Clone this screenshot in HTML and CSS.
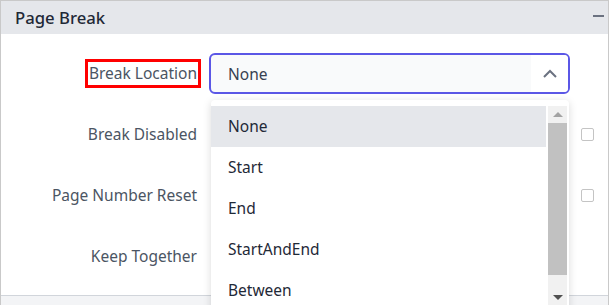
FILE: index.html
```html
<!DOCTYPE html>
<html lang="en">
  <head>
    <meta charset="UTF-8" />
    <meta name="viewport" content="width=device-width, initial-scale=1.0" />
    <title>Page Break</title>
    <link rel="stylesheet" href="styles.css">
  </head>
  <body>
    <div class="panel">
      <div class="panel-header">
        <span class="panel-title">Page Break</span>
        <span class="collapse-icon"></span>
      </div>

      <div class="panel-body">
        <div class="prop-row">
          <div class="prop-label"><span class="marked">Break Location</span></div>
          <div class="prop-control">
            <div class="dropdown">
              <span class="dropdown-value">None</span>
              <span class="dropdown-toggle">
                <svg width="16" height="10" viewBox="0 0 16 10">
                  <path d="M2 8 L8 2 L14 8" fill="none" stroke="#6b7280" stroke-width="2" />
                </svg>
              </span>
            </div>
            <!-- open list of the select -->
            <div class="dropdown-popup">
              <ul class="dropdown-list">
                <li class="active">None</li>
                <li>Start</li>
                <li>End</li>
                <li>StartAndEnd</li>
                <li>Between</li>
              </ul>
              <div class="scrollbar">
                <div class="scroll-btn"><span class="arrow-up"></span></div>
                <div class="scroll-thumb"></div>
                <div class="scroll-rest"></div>
                <div class="scroll-btn"><span class="arrow-down"></span></div>
              </div>
            </div>
          </div>
          <div class="prop-extra"></div>
        </div>

        <div class="prop-row">
          <div class="prop-label">Break Disabled</div>
          <div class="prop-control"></div>
          <div class="prop-extra"><span class="checkbox"></span></div>
        </div>

        <div class="prop-row">
          <div class="prop-label">Page Number Reset</div>
          <div class="prop-control"></div>
          <div class="prop-extra"><span class="checkbox"></span></div>
        </div>

        <div class="prop-row">
          <div class="prop-label">Keep Together</div>
          <div class="prop-control"></div>
          <div class="prop-extra"></div>
        </div>
      </div>

      <div class="panel-next"></div>
    </div>
  </body>
</html>
```

FILE: styles.css
```css
body {
  margin: 0;
  padding: 0;
  font-family: "Noto Sans", sans-serif;
  background: #fff;
  width: 610px;
  height: 305px;
  overflow: hidden;
}

.panel {
  width: 609px;
  box-sizing: border-box;
  border: 1px solid #c9c9c9;
  background: #fff;
}

.panel-header {
  height: 33px;
  background: #e5e7eb;
  display: flex;
  align-items: center;
  justify-content: space-between;
  padding: 0 4px 0 14px;
}

.panel-title {
  font-size: 16.7px;
  font-weight: 500;
  color: #1f2937;
}

.collapse-icon {
  width: 11px;
  height: 2px;
  background: #6b7280;
  margin-bottom: 3px;
}

.panel-body {
  padding: 19px 0 18px 0;
  display: flex;
  flex-direction: column;
  gap: 20px;
}

.prop-row {
  display: grid;
  grid-template-columns: 197px 361px 13px;
  column-gap: 11px;
  height: 41px;
  align-items: center;
}

.prop-label {
  text-align: right;
  font-size: 15.5px;
  color: #4b5563;
  line-height: 21px;
  padding-right: 1px;
}

.marked {
  display: inline-block;
  outline: 3px solid #ff0000;
  outline-offset: 1px;
}

.prop-control {
  position: relative;
  height: 41px;
}

.dropdown {
  height: 41px;
  box-sizing: border-box;
  border: 2px solid #5b57e6;
  border-radius: 6px;
  background: #f9fafb;
  display: flex;
  align-items: center;
  overflow: hidden;
}

.dropdown-value {
  flex: 1;
  padding-left: 17px;
  font-size: 15.5px;
  color: #374151;
}

.dropdown-toggle {
  width: 37px;
  height: 100%;
  background: #fff;
  display: flex;
  align-items: center;
  justify-content: center;
}

.dropdown-popup {
  position: absolute;
  top: 47px;
  left: 2px;
  width: 358px;
  height: 215px;
  background: #fff;
  border-radius: 4px;
  box-shadow: 0 2px 8px rgba(0, 0, 0, 0.15);
  display: flex;
  z-index: 10;
}

.dropdown-list {
  list-style: none;
  margin: 0;
  padding: 6px 0 0 0;
  width: 335px;
}

.dropdown-list li {
  height: 41px;
  line-height: 41px;
  padding-left: 17px;
  font-size: 15.5px;
  color: #1f2937;
}

.dropdown-list li.active {
  background: #e5e7eb;
}

.scrollbar {
  width: 19px;
  height: 200px;
  margin: 6px 2px 0 2px;
  background: #f1f1f1;
  display: flex;
  flex-direction: column;
}

.scroll-btn {
  height: 17px;
  display: flex;
  align-items: center;
  justify-content: center;
}

.scroll-thumb {
  height: 152px;
  background: #c1c1c1;
}

.scroll-rest {
  flex: 1;
}

.arrow-up {
  width: 0;
  height: 0;
  border-left: 5px solid transparent;
  border-right: 5px solid transparent;
  border-bottom: 5px solid #a3a3a3;
}

.arrow-down {
  width: 0;
  height: 0;
  border-left: 5px solid transparent;
  border-right: 5px solid transparent;
  border-top: 5px solid #505050;
}

.prop-extra {
  display: flex;
  align-items: center;
}

.checkbox {
  width: 13px;
  height: 13px;
  box-sizing: border-box;
  border: 1px solid #c4c4c4;
  border-radius: 2px;
  background: #fff;
}

.panel-next {
  height: 9px;
  border-top: 1px solid #d1d5db;
  background: #f3f4f6;
}
```
